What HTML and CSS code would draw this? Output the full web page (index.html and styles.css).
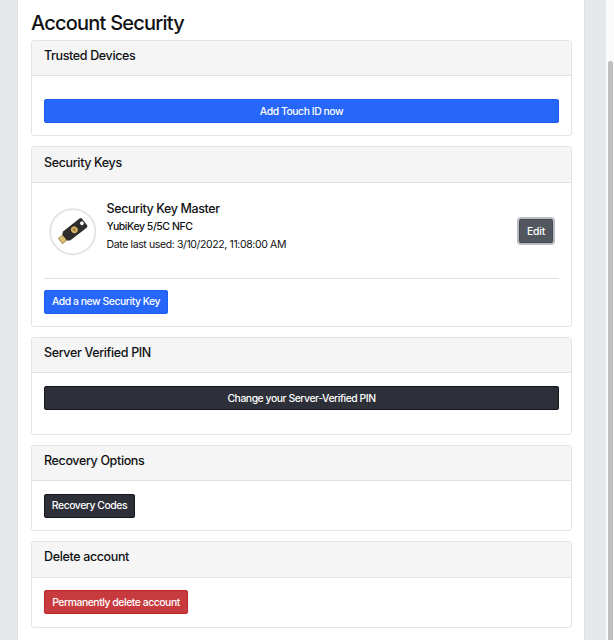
FILE: index.html
```html
<!DOCTYPE html>
<html lang="en">
<head>
<meta charset="utf-8">
<title>Account Security</title>
<link rel="stylesheet" href="styles.css">
</head>
<body>
<div class="layout">
  <main class="page">
    <h1 class="title">Account Security</h1>
    <section class="card devices">
      <h2 class="card-header">Trusted Devices</h2>
      <div class="card-body"><button class="btn primary block touch">Add Touch ID now</button></div>
    </section>
    <section class="card keys">
      <h2 class="card-header">Security Keys</h2>
      <div class="card-body">
        <div class="key">
          <div class="key-image">
            <svg width="48" height="48" viewBox="0 0 48 48">
              <circle cx="23.800" cy="23.700" r="22.600" fill="#fff" stroke="#e1e2e3" stroke-width="1.8"/>
              <g transform="translate(23.800 23) rotate(-38)">
                <path d="M-16-3h6v6.600h-6z" fill="#d3b66c" stroke="#8b7747" stroke-width=".7"/>
                <path d="M-15.500-1h4.500M-15.500 1.300h4.500" stroke="#efd58b" stroke-width=".6"/>
                <path d="M-10.500-3.700l2.500-2h21q1.800 0 1.800 1.800v8q0 1.800-1.800 1.800h-21l-2.500-2z" fill="#2e2d2c"/>
                <circle cx="2" cy="0" r="3.400" fill="#d5b45e"/>
                <path d="M.7-1.200l1.300 1.500 1.300-1.500M2 .3v1.500" fill="none" stroke="#65552d" stroke-width=".7"/>
                <circle cx="12" cy="-.600" r="1.900" fill="#fff"/>
              </g>
            </svg>
          </div>
          <div class="key-info">
            <h3 class="key-name">Security Key Master</h3>
            <p class="key-model">YubiKey 5/5C NFC</p>
            <p class="key-date">Date last used: 3/10/2022, 11:08:00 AM</p>
          </div>
          <button class="btn edit">Edit</button>
        </div>
        <hr class="rule">
        <button class="btn primary add">Add a new Security Key</button>
      </div>
    </section>
    <section class="card pin">
      <h2 class="card-header">Server Verified PIN</h2>
      <div class="card-body"><button class="btn dark block">Change your Server-Verified PIN</button></div>
    </section>
    <section class="card recovery">
      <h2 class="card-header">Recovery Options</h2>
      <div class="card-body"><button class="btn dark codes">Recovery Codes</button></div>
    </section>
    <section class="card delete">
      <h2 class="card-header">Delete account</h2>
      <div class="card-body"><button class="btn danger remove">Permanently delete account</button></div>
    </section>
  </main>
  <div class="scroll-track"><div class="scroll-thumb"></div></div>
</div>
</body>
</html>
```
FILE: styles.css
```css
* { box-sizing: border-box; }
body { margin: 0; height: 640px; overflow: hidden; background: #e4e8eb; color: #101113; font-family: Inter, "Liberation Sans", sans-serif; }
.layout { display: flex; height: 640px; }
.page { width: 568px; margin-left: 17px; padding: 10px 13px 0; background: #fff; border: solid #dfe2e4; border-width: 0 1px; }
h1, h2, h3, p { margin: 0; font-weight: 500; white-space: nowrap; }
.title { height: 30px; padding-top: 1px; font-size: 20px; line-height: 25px; letter-spacing: -.78px; }
.card { width: 541px; margin-bottom: 10px; border: 1px solid #e3e4e5; border-radius: 3px; background: #fff; }
.card-header { height: 36px; padding: 7px 12px 0; background: #f5f5f5; border-bottom: 1px solid #e1e2e3; border-radius: 2px 2px 0 0; font-size: 12.5px; line-height: 16px; letter-spacing: -.36px; }
.card-body { padding: 12px 12px 0; }
.devices { height: 96px; }
.devices .card-header { height: 35px; }
.devices .card-body { padding-top: 23px; }
.keys { height: 181px; }
.keys .card-header { padding-top: 8px; }
.pin { height: 98px; }
.pin .card-header { height: 35px; }
.pin .card-body { padding-top: 13px; }
.recovery { height: 86px; }
.recovery .card-header { height: 35px; }
.recovery .card-body { padding-top: 13px; }
.delete { height: 87px; }
.btn { display: flex; align-items: center; justify-content: center; height: 24px; padding: 1px 0 0; border: 1px solid; border-radius: 2px; color: #fff; font: 500 10.4px/16px Inter, "Liberation Sans", sans-serif; letter-spacing: -.45px; white-space: nowrap; }
.block { width: 515px; }
.primary { background: #2667fa; border-color: #1d5df0; }
.dark { background: #2d3038; border-color: #14171c; }
.danger { background: #c73b3f; border-color: #bd252a; }
.add { width: 124px; padding-top: 0; }
.codes { width: 91px; padding-top: 0; }
.remove { width: 144px; }
.edit { width: 34px; height: 24px; margin: 24px 6px 0 auto; background: #51565f; border-color: #444951; box-shadow: 0 0 0 2px #b9bdc3; letter-spacing: -.2px; }
.key { display: flex; height: 83px; }
.key-image { width: 48px; height: 48px; margin: 13px 0 0 5px; }
.key-image svg { display: block; }
.key-info { padding: 6px 0 0 9.5px; }
.key-name { height: 18px; font-size: 12.5px; line-height: 16px; letter-spacing: -.39px; }
.key-model { height: 18px; font-size: 10.5px; line-height: 15px; letter-spacing: -.45px; }
.key-date { font-size: 10.5px; line-height: 15px; font-weight: 400; letter-spacing: -.38px; }
.rule { height: 1px; margin: 0 0 11px; border: 0; background: #dedfe0; }
.scroll-track { display: flex; justify-content: center; width: 9px; margin-left: auto; padding-top: 61px; background: #fafafa; border-left: 1px solid #eaebec; }
.scroll-thumb { width: 5px; height: 590px; border-radius: 3px; background: #bfbfbf; }
```
